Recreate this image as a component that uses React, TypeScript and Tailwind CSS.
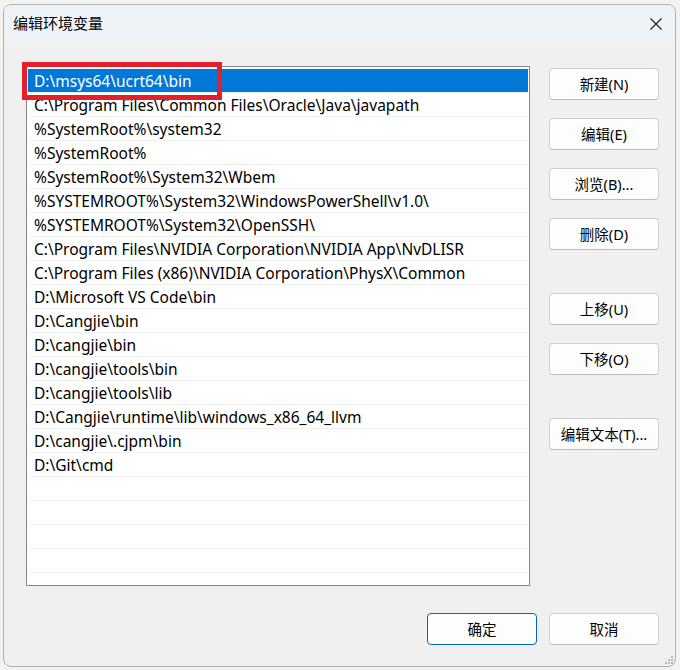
import React from "react";

const paths = [
  "D:\\msys64\\ucrt64\\bin",
  "C:\\Program Files\\Common Files\\Oracle\\Java\\javapath",
  "%SystemRoot%\\system32",
  "%SystemRoot%",
  "%SystemRoot%\\System32\\Wbem",
  "%SYSTEMROOT%\\System32\\WindowsPowerShell\\v1.0\\",
  "%SYSTEMROOT%\\System32\\OpenSSH\\",
  "C:\\Program Files\\NVIDIA Corporation\\NVIDIA App\\NvDLISR",
  "C:\\Program Files (x86)\\NVIDIA Corporation\\PhysX\\Common",
  "D:\\Microsoft VS Code\\bin",
  "D:\\Cangjie\\bin",
  "D:\\cangjie\\bin",
  "D:\\cangjie\\tools\\bin",
  "D:\\cangjie\\tools\\lib",
  "D:\\Cangjie\\runtime\\lib\\windows_x86_64_llvm",
  "D:\\cangjie\\.cjpm\\bin",
  "D:\\Git\\cmd",
];

const rows = [...paths, "", "", "", "", ""];

const font = { fontFamily: '"Segoe UI", "Noto Sans", "Noto Sans CJK SC", sans-serif' };

function Btn({ label, primary, className = "" }: { label: string; primary?: boolean; className?: string }) {
  return (
    <button
      className={
        "w-[110px] h-[32px] rounded-[4px] bg-[#fdfdfd] text-[14.5px] text-black flex items-center justify-center " +
        (primary ? "border border-[#0067c0] " : "border border-[#d0d0d0] border-b-[#bcbcbc] ") +
        className
      }
    >
      <span className="mt-[1px]">{label}</span>
    </button>
  );
}

export default function App() {
  return (
    <div className="w-[680px] h-[670px] bg-[#f2f2f2] pl-[3px] pt-[4px] pr-[4px] pb-[3px]" style={font}>
      <div className="relative w-full h-full rounded-[8px] border border-[#b0b0b0] bg-[#f0f0f0] overflow-hidden">
        <div className="h-[37px] bg-[#eef3f8] flex items-center justify-between pl-[9px] pr-[13px]">
          <span className="text-[15px] text-black leading-none mt-[-1px]">编辑环境变量</span>
          <svg width="12" height="12" viewBox="0 0 12 12" className="mt-[1px]">
            <path d="M0.5 0.5 L11.5 11.5 M11.5 0.5 L0.5 11.5" stroke="#1a1a1a" strokeWidth="1.1" />
          </svg>
        </div>

        <div className="flex pt-[24px] pl-[22px]">
          <div className="relative">
            <div className="w-[504px] h-[520px] border border-[#828790] bg-white overflow-hidden pt-[2px] px-px">
              {rows.map((p, i) => (
                <div
                  key={i}
                  className={
                    "h-[24px] border-b border-[#f0f0f0] pl-[6px] flex items-center text-[15.5px] whitespace-nowrap " +
                    (i === 0 ? "bg-[#0078d7] text-white" : "text-black")
                  }
                >
                  <span className="mt-[3px]">{p}</span>
                </div>
              ))}
            </div>
            <div className="absolute left-[-4px] top-[-4px] w-[200px] h-[38px] border-[5px] border-[#e3202b]" />
          </div>

          <div className="ml-[19px] pt-[2px] flex flex-col">
            <Btn label="新建(N)" />
            <Btn label="编辑(E)" className="mt-[18px]" />
            <Btn label="浏览(B)..." className="mt-[18px]" />
            <Btn label="删除(D)" className="mt-[18px]" />
            <Btn label="上移(U)" className="mt-[43px]" />
            <Btn label="下移(O)" className="mt-[18px]" />
            <Btn label="编辑文本(T)..." className="mt-[43px]" />
          </div>
        </div>

        <div className="flex justify-end gap-[12px] mt-[27px] pr-[16px]">
          <Btn label="确定" primary />
          <Btn label="取消" />
        </div>

        <svg width="10" height="10" viewBox="0 0 10 10" className="absolute right-[1px] bottom-[1px]">
          <rect x="7" y="1" width="2" height="2" fill="#b8b8b8" />
          <rect x="4" y="4" width="2" height="2" fill="#b8b8b8" />
          <rect x="7" y="4" width="2" height="2" fill="#b8b8b8" />
          <rect x="1" y="7" width="2" height="2" fill="#b8b8b8" />
          <rect x="4" y="7" width="2" height="2" fill="#b8b8b8" />
          <rect x="7" y="7" width="2" height="2" fill="#b8b8b8" />
        </svg>
      </div>
    </div>
  );
}
